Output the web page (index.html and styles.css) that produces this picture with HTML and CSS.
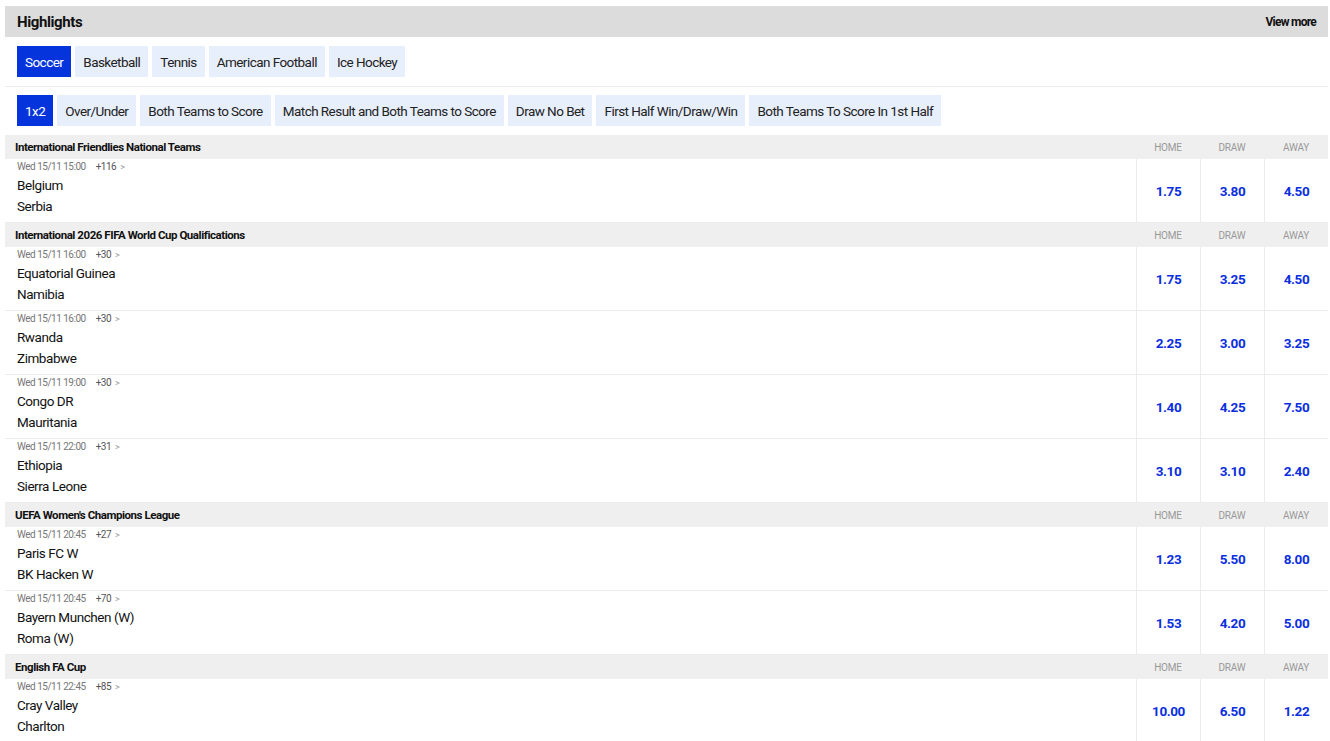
FILE: index.html
```html
<!DOCTYPE html>
<html lang="en">
  <head>
    <meta charset="UTF-8" />
    <title>Highlights</title>
    <link rel="stylesheet" href="styles.css">
  </head>
  <body>
    <div class="page">
      <div class="head">
        <h1>Highlights</h1>
        <a class="more" href="#">View more</a>
      </div>

      <div class="tabs sports">
        <button class="tab active">Soccer</button>
        <button class="tab">Basketball</button>
        <button class="tab">Tennis</button>
        <button class="tab">American Football</button>
        <button class="tab">Ice Hockey</button>
      </div>

      <div class="tabs markets">
        <button class="tab active">1x2</button>
        <button class="tab">Over/Under</button>
        <button class="tab">Both Teams to Score</button>
        <button class="tab">Match Result and Both Teams to Score</button>
        <button class="tab">Draw No Bet</button>
        <button class="tab">First Half Win/Draw/Win</button>
        <button class="tab">Both Teams To Score In 1st Half</button>
      </div>

      <div id="events"></div>
    </div>

    <script>
      const leagues = [
        {
          name: "International Friendlies National Teams",
          games: [
            ["Wed 15/11 15:00", "+116", "Belgium", "Serbia", "1.75", "3.80", "4.50"],
          ],
        },
        {
          name: "International 2026 FIFA World Cup Qualifications",
          games: [
            ["Wed 15/11 16:00", "+30", "Equatorial Guinea", "Namibia", "1.75", "3.25", "4.50"],
            ["Wed 15/11 16:00", "+30", "Rwanda", "Zimbabwe", "2.25", "3.00", "3.25"],
            ["Wed 15/11 19:00", "+30", "Congo DR", "Mauritania", "1.40", "4.25", "7.50"],
            ["Wed 15/11 22:00", "+31", "Ethiopia", "Sierra Leone", "3.10", "3.10", "2.40"],
          ],
        },
        {
          name: "UEFA Women's Champions League",
          games: [
            ["Wed 15/11 20:45", "+27", "Paris FC W", "BK Hacken W", "1.23", "5.50", "8.00"],
            ["Wed 15/11 20:45", "+70", "Bayern Munchen (W)", "Roma (W)", "1.53", "4.20", "5.00"],
          ],
        },
        {
          name: "English FA Cup",
          games: [
            ["Wed 15/11 22:45", "+85", "Cray Valley", "Charlton", "10.00", "6.50", "1.22"],
          ],
        },
      ];

      let html = "";
      for (const league of leagues) {
        html += `
        <div class="league">
          <div class="league-name">${league.name}</div>
          <div class="col-label">HOME</div>
          <div class="col-label">DRAW</div>
          <div class="col-label">AWAY</div>
        </div>`;
        for (const g of league.games) {
          html += `
        <div class="match">
          <div class="info">
            <div class="when">${g[0]}<span class="markets-count">${g[1]}</span><span class="chev">&gt;</span></div>
            <div class="team">${g[2]}</div>
            <div class="team">${g[3]}</div>
          </div>
          <button class="odd">${g[4]}</button>
          <button class="odd">${g[5]}</button>
          <button class="odd">${g[6]}</button>
        </div>`;
        }
      }
      document.getElementById("events").innerHTML = html;
    </script>
  </body>
</html>
```

FILE: styles.css
```css
body {
  margin: 0;
  font-family: Roboto, "Liberation Sans", sans-serif;
  color: #111;
  background: #fff;
}
.page {
  padding: 6px 2px 0 5px;
}
.head {
  display: flex;
  align-items: center;
  justify-content: space-between;
  height: 31px;
  padding: 0 12px;
  background: #dcdcdc;
}
.head h1 {
  margin: 0;
  font-size: 15px;
  font-weight: 700;
  letter-spacing: -0.4px;
  color: #111;
}
.more {
  font-size: 12px;
  font-weight: 700;
  letter-spacing: -0.75px;
  color: #111;
  text-decoration: none;
}
.tabs {
  display: flex;
  gap: 4px;
  padding: 9px 12px;
}
.sports {
  border-bottom: 1px solid #ececec;
}
.markets {
  padding-top: 8px;
}
.tab {
  height: 31px;
  padding: 0 8px;
  border: none;
  background: #e8effc;
  color: #222;
  font-family: inherit;
  font-size: 13.5px;
  letter-spacing: -0.55px;
}
.tab.active {
  background: #0634dc;
  color: #fff;
}
.league {
  display: flex;
  align-items: center;
  height: 24px;
  background: #efefef;
}
.league-name {
  flex: 1;
  padding-left: 10px;
  font-size: 11.5px;
  font-weight: 700;
  letter-spacing: -0.45px;
}
.col-label {
  width: 64px;
  text-align: center;
  font-size: 10px;
  color: #999;
  letter-spacing: -0.2px;
}
.match {
  display: flex;
  height: 63px;
  border-bottom: 1px solid #ececec;
}
.info {
  flex: 1;
  padding: 0 12px;
}
.when {
  font-size: 10px;
  line-height: 16px;
  color: #777;
  letter-spacing: -0.5px;
}
.markets-count {
  margin-left: 10px;
  color: #555;
}
.chev {
  margin-left: 4px;
  font-size: 9px;
  color: #999;
}
.team {
  font-size: 13.5px;
  line-height: 21px;
  letter-spacing: -0.45px;
  color: #111;
}
.odd {
  width: 64px;
  border: none;
  border-left: 1px solid #ececec;
  background: #fff;
  color: #0b2fe0;
  font-family: inherit;
  font-size: 13.5px;
  font-weight: 700;
  letter-spacing: -0.4px;
  padding: 0;
}
```
